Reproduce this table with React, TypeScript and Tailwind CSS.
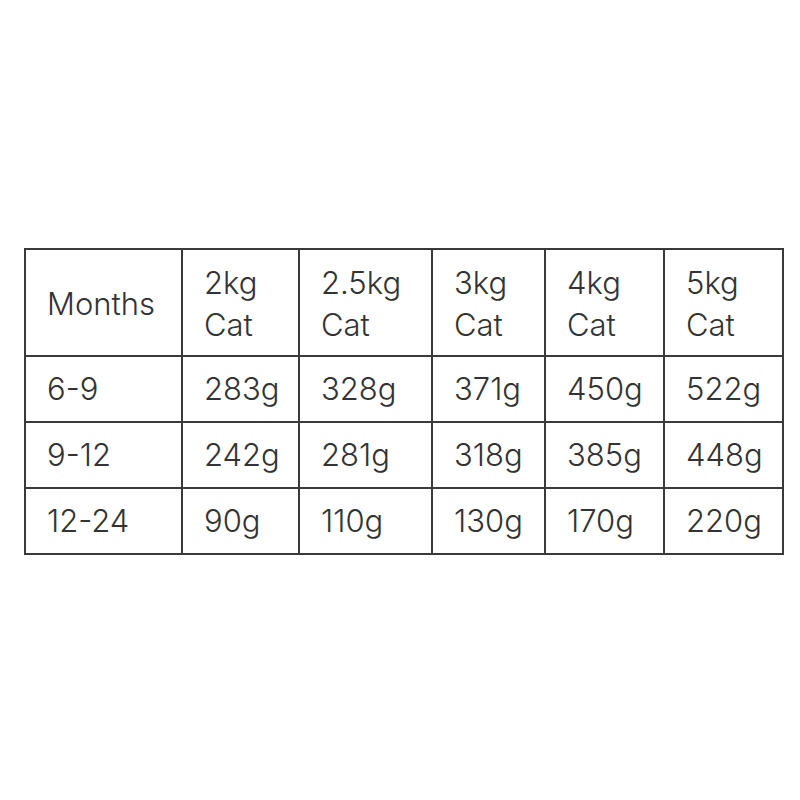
const headers = ["2kg Cat", "2.5kg Cat", "3kg Cat", "4kg Cat", "5kg Cat"]

const rows = [
  { months: "6-9", values: ["283g", "328g", "371g", "450g", "522g"] },
  { months: "9-12", values: ["242g", "281g", "318g", "385g", "448g"] },
  { months: "12-24", values: ["90g", "110g", "130g", "170g", "220g"] },
]

const colWidths = ["w-[157px]", "w-[117px]", "w-[133px]", "w-[113px]", "w-[119px]", "w-[119px]"]

export default function App() {
  return (
    <div className="w-[800px] h-[800px] bg-white pt-[248px] pl-[24px] font-['Inter','Lato',sans-serif] font-light text-[#333333]">
      <table className="table-fixed border-collapse w-[758px] text-[31px] leading-[42px]">
        <colgroup>
          {colWidths.map((w, i) => (
            <col key={i} className={w} />
          ))}
        </colgroup>
        <thead>
          <tr className="h-[107px]">
            <th className="border-2 border-[#3a3a3a] pl-[21px] pt-[2px] text-left font-light">Months</th>
            {headers.map((h) => {
              const [w, c] = h.split(" ")
              return (
                <th key={h} className="border-2 border-[#3a3a3a] pl-[21px] pt-[2px] text-left font-light">
                  {w}
                  <br />
                  {c}
                </th>
              )
            })}
          </tr>
        </thead>
        <tbody>
          {rows.map((r) => (
            <tr key={r.months} className="h-[66px]">
              <td className="border-2 border-[#3a3a3a] pl-[21px]">{r.months}</td>
              {r.values.map((v, i) => (
                <td key={i} className="border-2 border-[#3a3a3a] pl-[21px]">{v}</td>
              ))}
            </tr>
          ))}
        </tbody>
      </table>
    </div>
  )
}
